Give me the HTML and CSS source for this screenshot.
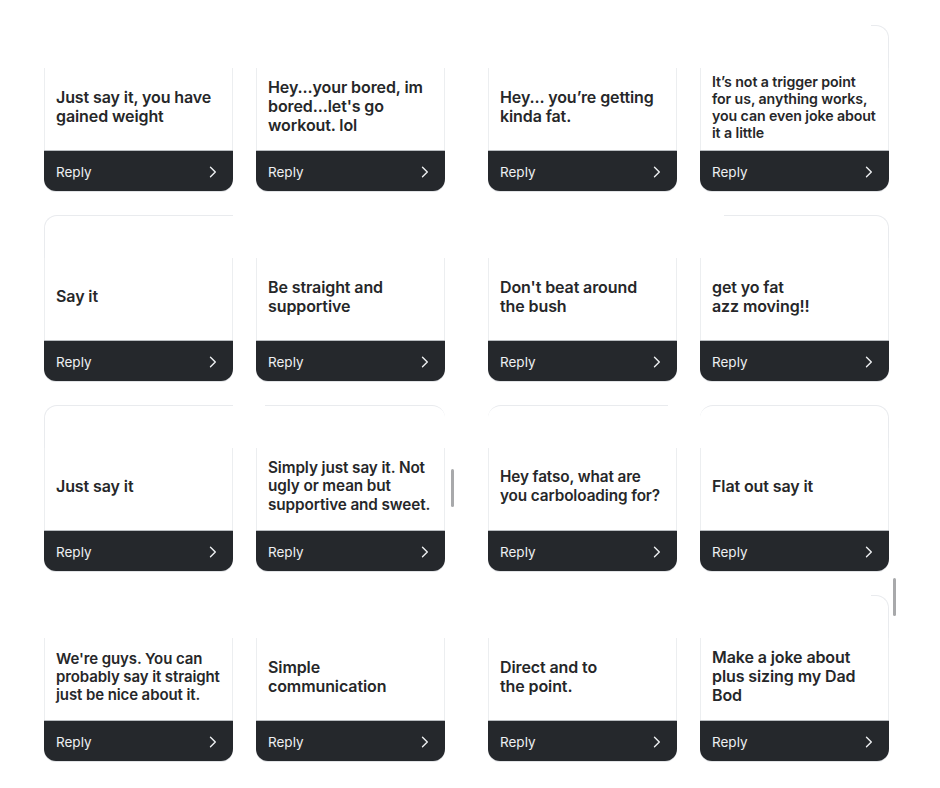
FILE: index.html
```html
<!DOCTYPE html>
<html lang="en">
<head>
<meta charset="utf-8">
<title>Replies</title>
<link rel="stylesheet" href="styles.css">
</head>
<body>
<main class="board">
  <section class="pane">
    <article class="card">
      <div class="cap"></div>
      <div class="body"><p class="msg">Just say it, you have<br>gained weight</p></div>
      <div class="foot"><span>Reply</span><svg class="chev" viewBox="0 0 8 12" width="8" height="12"><path d="M1.5 1.2 L6.3 6 L1.5 10.8"/></svg></div>
    </article>
    <article class="card">
      <div class="cap"></div>
      <div class="body"><p class="msg">Hey...your bored, im<br>bored...let's go<br>workout. lol</p></div>
      <div class="foot"><span>Reply</span><svg class="chev" viewBox="0 0 8 12" width="8" height="12"><path d="M1.5 1.2 L6.3 6 L1.5 10.8"/></svg></div>
    </article>
    <article class="card">
      <div class="cap"><div class="edge tl-full"></div></div>
      <div class="body"><p class="msg">Say it</p></div>
      <div class="foot"><span>Reply</span><svg class="chev" viewBox="0 0 8 12" width="8" height="12"><path d="M1.5 1.2 L6.3 6 L1.5 10.8"/></svg></div>
    </article>
    <article class="card">
      <div class="cap"></div>
      <div class="body"><p class="msg">Be straight and<br>supportive</p></div>
      <div class="foot"><span>Reply</span><svg class="chev" viewBox="0 0 8 12" width="8" height="12"><path d="M1.5 1.2 L6.3 6 L1.5 10.8"/></svg></div>
    </article>
    <article class="card">
      <div class="cap"><div class="edge tl-full"></div></div>
      <div class="body"><p class="msg">Just say it</p></div>
      <div class="foot"><span>Reply</span><svg class="chev" viewBox="0 0 8 12" width="8" height="12"><path d="M1.5 1.2 L6.3 6 L1.5 10.8"/></svg></div>
    </article>
    <article class="card">
      <div class="cap"><div class="edge top-r"></div></div>
      <div class="body"><p class="msg sm">Simply just say it. Not<br>ugly or mean but<br>supportive and sweet.</p></div>
      <div class="foot"><span>Reply</span><svg class="chev" viewBox="0 0 8 12" width="8" height="12"><path d="M1.5 1.2 L6.3 6 L1.5 10.8"/></svg></div>
    </article>
    <article class="card">
      <div class="cap"></div>
      <div class="body"><p class="msg sm2">We're guys. You can<br>probably say it straight<br>just be nice about it.</p></div>
      <div class="foot"><span>Reply</span><svg class="chev" viewBox="0 0 8 12" width="8" height="12"><path d="M1.5 1.2 L6.3 6 L1.5 10.8"/></svg></div>
    </article>
    <article class="card">
      <div class="cap"></div>
      <div class="body"><p class="msg">Simple<br>communication</p></div>
      <div class="foot"><span>Reply</span><svg class="chev" viewBox="0 0 8 12" width="8" height="12"><path d="M1.5 1.2 L6.3 6 L1.5 10.8"/></svg></div>
    </article>
  </section>

  <section class="pane">
    <article class="card">
      <div class="cap"></div>
      <div class="body"><p class="msg">Hey... you’re getting<br>kinda fat.</p></div>
      <div class="foot"><span>Reply</span><svg class="chev" viewBox="0 0 8 12" width="8" height="12"><path d="M1.5 1.2 L6.3 6 L1.5 10.8"/></svg></div>
    </article>
    <article class="card">
      <div class="cap"><div class="edge tr-short"></div></div>
      <div class="body"><p class="msg xs">It’s not a trigger point<br>for us, anything works,<br>you can even joke about<br>it a little</p></div>
      <div class="foot"><span>Reply</span><svg class="chev" viewBox="0 0 8 12" width="8" height="12"><path d="M1.5 1.2 L6.3 6 L1.5 10.8"/></svg></div>
    </article>
    <article class="card">
      <div class="cap"></div>
      <div class="body"><p class="msg">Don't beat around<br>the bush</p></div>
      <div class="foot"><span>Reply</span><svg class="chev" viewBox="0 0 8 12" width="8" height="12"><path d="M1.5 1.2 L6.3 6 L1.5 10.8"/></svg></div>
    </article>
    <article class="card">
      <div class="cap"><div class="edge tr-long"></div></div>
      <div class="body"><p class="msg">get yo fat<br>azz moving!!</p></div>
      <div class="foot"><span>Reply</span><svg class="chev" viewBox="0 0 8 12" width="8" height="12"><path d="M1.5 1.2 L6.3 6 L1.5 10.8"/></svg></div>
    </article>
    <article class="card">
      <div class="cap"><div class="edge top-l"></div></div>
      <div class="body"><p class="msg sm">Hey fatso, what are<br>you carboloading for?</p></div>
      <div class="foot"><span>Reply</span><svg class="chev" viewBox="0 0 8 12" width="8" height="12"><path d="M1.5 1.2 L6.3 6 L1.5 10.8"/></svg></div>
    </article>
    <article class="card">
      <div class="cap"><div class="edge top-both"></div></div>
      <div class="body"><p class="msg">Flat out say it</p></div>
      <div class="foot"><span>Reply</span><svg class="chev" viewBox="0 0 8 12" width="8" height="12"><path d="M1.5 1.2 L6.3 6 L1.5 10.8"/></svg></div>
    </article>
    <article class="card">
      <div class="cap"></div>
      <div class="body"><p class="msg">Direct and to<br>the point.</p></div>
      <div class="foot"><span>Reply</span><svg class="chev" viewBox="0 0 8 12" width="8" height="12"><path d="M1.5 1.2 L6.3 6 L1.5 10.8"/></svg></div>
    </article>
    <article class="card">
      <div class="cap"><div class="edge tr-short"></div></div>
      <div class="body"><p class="msg">Make a joke about<br>plus sizing my Dad<br>Bod</p></div>
      <div class="foot"><span>Reply</span><svg class="chev" viewBox="0 0 8 12" width="8" height="12"><path d="M1.5 1.2 L6.3 6 L1.5 10.8"/></svg></div>
    </article>
  </section>
</main>
<div class="scrollbar sb-mid"></div>
<div class="scrollbar sb-right"></div>
</body>
</html>
```

FILE: styles.css
```css
html, body {
  margin: 0;
  padding: 0;
  background: #ffffff;
}

body {
  position: relative;
  width: 940px;
  height: 788px;
  overflow: hidden;
  font-family: Inter, "Noto Sans", "Liberation Sans", sans-serif;
}

.board {
  display: flex;
  gap: 43px;
  padding: 25px 0 0 44px;
}

.pane {
  display: grid;
  grid-template-columns: 189px 189px;
  column-gap: 23px;
  row-gap: 24px;
}

.card {
  display: flex;
  flex-direction: column;
  height: 166px;
}

.cap {
  height: 43px;
  display: flex;
  flex-shrink: 0;
}

.edge {
  box-sizing: border-box;
  height: 43px;
  border: 0 solid #e9ebee;
}

.edge.tl-full {
  width: 100%;
  border-top-width: 1px;
  border-left-width: 1px;
  border-top-left-radius: 13px;
}

.edge.tr-short {
  width: 18px;
  margin-left: auto;
  border-top-width: 1px;
  border-right-width: 1px;
  border-top-right-radius: 13px;
}

.edge.tr-long {
  width: 165px;
  margin-left: auto;
  border-top-width: 1px;
  border-right-width: 1px;
  border-top-right-radius: 13px;
}

.edge.top-r {
  width: 180px;
  height: 14px;
  margin-left: auto;
  border-top-width: 1px;
  border-top-right-radius: 13px;
}

.edge.top-l {
  width: 180px;
  height: 14px;
  border-top-width: 1px;
  border-top-left-radius: 13px;
}

.edge.top-both {
  width: 100%;
  border-top-width: 1px;
  border-right-width: 1px;
  border-top-left-radius: 13px;
  border-top-right-radius: 13px;
}

.body {
  flex: 1;
  min-height: 0;
  display: flex;
  align-items: center;
  box-sizing: border-box;
  padding: 0 10px 5px 11px;
  border-left: 1px solid #eceef0;
  border-right: 1px solid #eceef0;
}

.msg {
  margin: 0;
  white-space: nowrap;
  font-size: 16px;
  line-height: 19px;
  font-weight: 600;
  color: #262729;
  letter-spacing: -0.1px;
}

.msg.sm {
  font-size: 15.3px;
  line-height: 18.5px;
}

.msg.sm2 {
  font-size: 15px;
  line-height: 18px;
}

.msg.xs {
  font-size: 14.2px;
  line-height: 17px;
}

.foot {
  height: 41px;
  flex-shrink: 0;
  box-sizing: border-box;
  display: flex;
  align-items: center;
  justify-content: space-between;
  padding: 2px 16px 0 12px;
  background: #25282c;
  border-top: 1px solid #b9bcc0;
  border-radius: 0 0 12px 12px;
  box-shadow: 0 1px 0 #e1e3e6;
  color: #eef0f2;
  font-size: 13.5px;
}

.chev {
  display: block;
}

.chev path {
  fill: none;
  stroke: #eef0f2;
  stroke-width: 1.4;
  stroke-linecap: round;
  stroke-linejoin: round;
}

.scrollbar {
  position: absolute;
  width: 3px;
  height: 38px;
  border-radius: 2px;
  background: #a8a9ab;
}

.sb-mid {
  left: 451px;
  top: 469px;
}

.sb-right {
  left: 893px;
  top: 578px;
}
```
